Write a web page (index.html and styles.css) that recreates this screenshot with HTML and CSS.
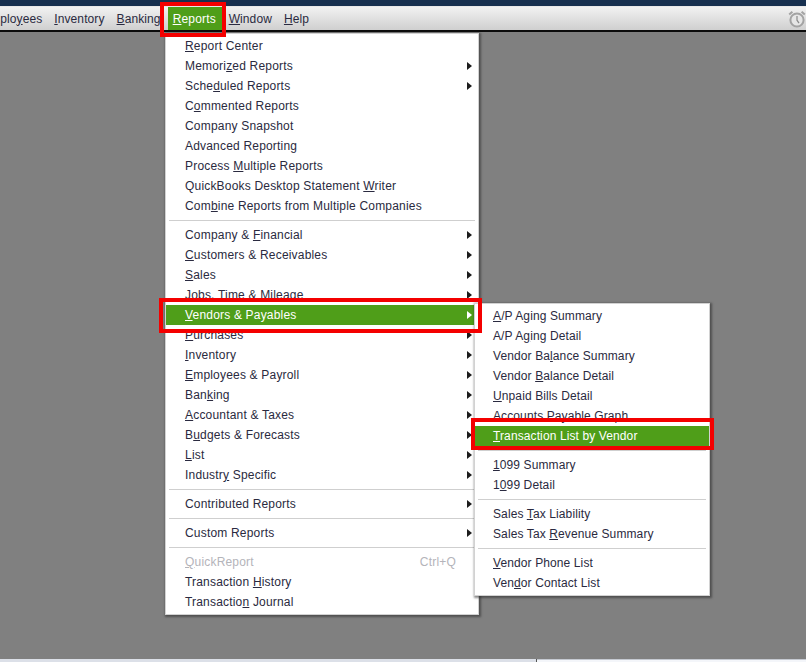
FILE: index.html
```html
<!DOCTYPE html>
<html lang="en">
<head>
<meta charset="utf-8">
<title>Reports menu</title>
<link rel="stylesheet" href="styles.css">
</head>
<body>
<div class="app">
  <div class="titlestrip"></div>
  <nav class="menubar">
    <span class="bar-item first">Emplo<u>y</u>ees</span>
    <span class="bar-item inv"><u>I</u>nventory</span>
    <span class="bar-item bank"><u>B</u>anking</span>
    <span class="bar-item active"><span><u>R</u>eports</span></span>
    <span class="bar-item win"><u>W</u>indow</span>
    <span class="bar-item help"><u>H</u>elp</span>
    <svg class="clock" viewBox="0 0 18 18" width="18" height="18" aria-hidden="true">
      <circle cx="9" cy="10" r="6.6" fill="#e6e6e6" stroke="#a3a3a3" stroke-width="2"/>
      <path d="M9 6v4.2l2 3" fill="none" stroke="#8a8a8a" stroke-width="1.2"/>
      <path d="M1.2 4.6 4.4 1.8M16.8 4.6 13.6 1.8" fill="none" stroke="#a3a3a3" stroke-width="2"/>
    </svg>
  </nav>
  <main class="workspace">
    <div class="menu main-menu">
      <div class="item"><span><u>R</u>eport Center</span></div>
      <div class="item sub"><span>Memori<u>z</u>ed Reports</span><i></i></div>
      <div class="item sub"><span>Sche<u>d</u>uled Reports</span><i></i></div>
      <div class="item"><span>C<u>o</u>mmented Reports</span></div>
      <div class="item"><span>Company Snapshot</span></div>
      <div class="item"><span>Advanced Reporting</span></div>
      <div class="item"><span>Process <u>M</u>ultiple Reports</span></div>
      <div class="item"><span>QuickBooks Desktop Statement <u>W</u>riter</span></div>
      <div class="item"><span>Com<u>b</u>ine Reports from Multiple Companies</span></div>
      <hr class="sep">
      <div class="item sub"><span>Company &amp; <u>F</u>inancial</span><i></i></div>
      <div class="item sub"><span><u>C</u>ustomers &amp; Receivables</span><i></i></div>
      <div class="item sub"><span><u>S</u>ales</span><i></i></div>
      <div class="item sub"><span><u>J</u>obs, Time &amp; Mileage</span><i></i></div>
      <div class="item sub on"><span><u>V</u>endors &amp; Payables</span><i></i></div>
      <div class="item sub"><span><u>P</u>urchases</span><i></i></div>
      <div class="item sub"><span><u>I</u>nventory</span><i></i></div>
      <div class="item sub"><span><u>E</u>mployees &amp; Payroll</span><i></i></div>
      <div class="item sub"><span>Ban<u>k</u>ing</span><i></i></div>
      <div class="item sub"><span><u>A</u>ccountant &amp; Taxes</span><i></i></div>
      <div class="item sub"><span>B<u>u</u>dgets &amp; Forecasts</span><i></i></div>
      <div class="item sub"><span><u>L</u>ist</span><i></i></div>
      <div class="item sub"><span>Industr<u>y</u> Specific</span><i></i></div>
      <hr class="sep">
      <div class="item sub"><span>Contributed Reports</span><i></i></div>
      <hr class="sep">
      <div class="item sub"><span>Custom Reports</span><i></i></div>
      <hr class="sep">
      <div class="item off"><span><u>Q</u>uickReport</span><em>Ctrl+Q</em></div>
      <div class="item"><span>Transaction <u>H</u>istory</span></div>
      <div class="item"><span>Transactio<u>n</u> Journal</span></div>
    </div>
    <div class="menu sub-menu">
      <div class="item"><span><u>A</u>/P Aging Summary</span></div>
      <div class="item"><span>A/P A<u>g</u>ing Detail</span></div>
      <div class="item"><span>Vendor Ba<u>l</u>ance Summary</span></div>
      <div class="item"><span>Vendor <u>B</u>alance Detail</span></div>
      <div class="item"><span><u>U</u>npaid Bills Detail</span></div>
      <div class="item"><span>Accounts <u>P</u>ayable Graph</span></div>
      <div class="item on"><span><u>T</u>ransaction List by Vendor</span></div>
      <hr class="sep">
      <div class="item"><span><u>1</u>099 Summary</span></div>
      <div class="item"><span>1<u>0</u>99 Detail</span></div>
      <hr class="sep">
      <div class="item"><span>Sales <u>T</u>ax Liability</span></div>
      <div class="item"><span>Sales Tax <u>R</u>evenue Summary</span></div>
      <hr class="sep">
      <div class="item"><span><u>V</u>endor Phone List</span></div>
      <div class="item"><span>Ven<u>d</u>or Contact List</span></div>
    </div>
    <div class="callout call-reports"></div>
    <div class="callout call-vendors"></div>
    <div class="callout call-list"></div>
  </main>
  <footer class="statusbar">
    <div class="status-left"></div>
    <div class="status-right"></div>
  </footer>
</div>
</body>
</html>
```
FILE: styles.css
```css
* { box-sizing: border-box; }
html, body { margin: 0; height: 100%; overflow: hidden; }
body { font-family: "Liberation Sans", Arial, sans-serif; font-size: 12px; color: #2a2a40; }

.app { display: flex; flex-direction: column; width: 806px; height: 662px; overflow: hidden; }

.titlestrip { height: 6px; flex: none; background: #17304f; }

.menubar {
  flex: none; height: 26px; display: flex; align-items: center; position: relative;
  background: linear-gradient(#f2f2f2, #cfcfcf);
  border-top: 1px solid #e8e8e8;
  border-bottom: 2px solid #0c0c0c;
  letter-spacing: .1px;
}
.bar-item { white-space: nowrap; }
.bar-item.first { margin-left: -18px; }
.bar-item.inv { margin-left: 12px; }
.bar-item.bank { margin-left: 12px; }
.bar-item.active {
  flex: none; margin-left: 7px; width: 56px; height: 23px; padding-left: 5px;
  display: flex; align-items: center; color: #fff; background: #4f9e19; letter-spacing: .2px;
}
.bar-item.win { margin-left: 5px; }
.bar-item.help { margin-left: 12px; }
.clock { position: absolute; right: 0; top: 3px; }

.workspace { flex: 1; position: relative; background: #808080; }

.menu {
  position: absolute; background: #fff; border: 1px solid #d2d2d2;
  box-shadow: 1px 1px 2px 1px rgba(40, 40, 40, .55);
}
.main-menu { left: 165px; top: 1px; width: 314px; height: 582px; padding-top: 2px; letter-spacing: .19px; }
.sub-menu { left: 474px; top: 271px; width: 236px; height: 293px; padding-top: 2px; letter-spacing: .11px; }
.sub-menu .item { padding-left: 18px; }

.item {
  height: 20px; display: flex; align-items: center; justify-content: space-between;
  padding: 0 6px 0 19px; white-space: nowrap; position: relative;
}
.item i {
  width: 0; height: 0; flex: none;
  border-left: 5px solid #1c1c1c; border-top: 4.5px solid transparent; border-bottom: 4.5px solid transparent;
}
.item em { font-style: normal; margin-right: 16px; }
.item.on { background: #4f9e19; color: #fff; }
.item.on i { border-left-color: #fff; }
.item.off { color: #b4b4ba; }

.sep { height: 1px; margin: 4px 3px 4px 3px; border: 0; background: #cfcfcf; }

.callout { position: absolute; border: 4px solid #f40000; pointer-events: none; }
.call-reports { left: 160px; top: -30px; width: 66px; height: 35px; }
.call-vendors { left: 159px; top: 266px; width: 323px; height: 35px; }
.call-list { left: 471px; top: 386px; width: 243px; height: 32px; }

.statusbar { flex: none; height: 3px; display: flex; }
.status-left { width: 537px; background: #dce0e8; border-right: 1px solid #555; }
.status-right { flex: 1; background: #f4f6fa; border-top: 1px solid #c6cad2; }
```
